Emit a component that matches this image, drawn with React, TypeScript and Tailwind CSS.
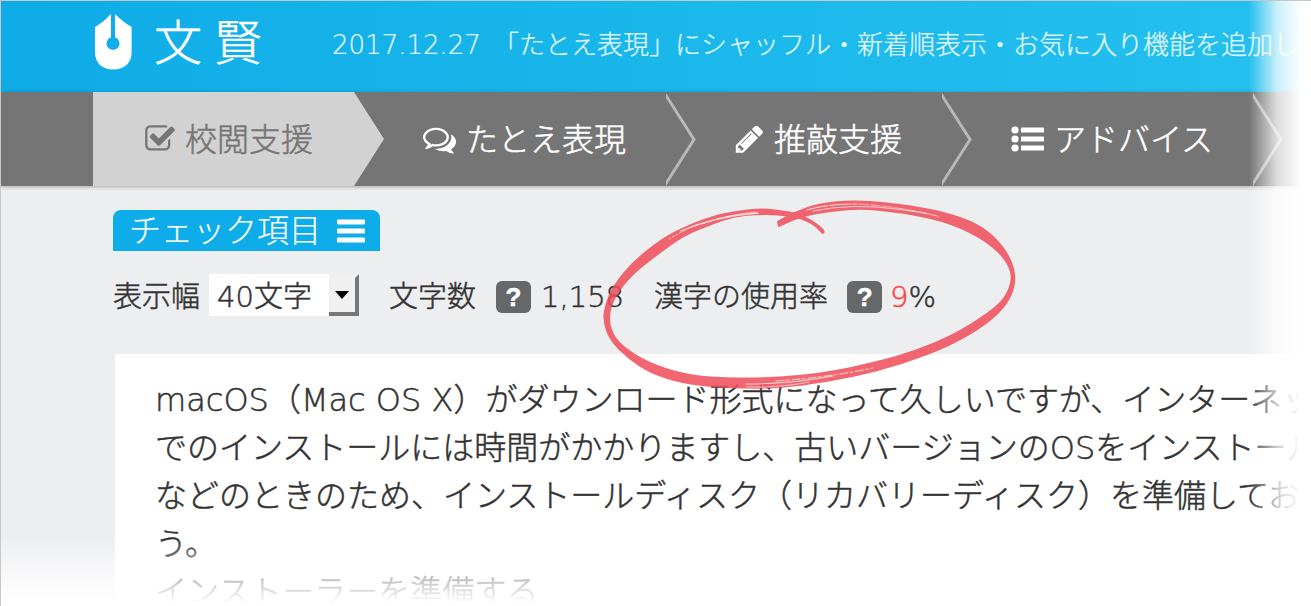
import React from 'react';

interface IconProps {
  className?: string;
}

const CheckIcon: React.FC<IconProps> = ({ className }) => (
  <svg viewBox="64 0 1664 1792" className={className} fill="currentColor" aria-hidden="true">
    <path d="M1472 930v318q0 119-84.5 203.5t-203.5 84.5h-832q-119 0-203.5-84.5t-84.5-203.5v-832q0-119 84.5-203.5t203.5-84.5h832q63 0 117 25 15 7 18 23 3 17-9 29l-49 49q-10 10-23 10-3 0-9-2-23-6-45-6h-832q-66 0-113 47t-47 113v832q0 66 47 113t113 47h832q66 0 113-47t47-113v-254q0-13 9-22l64-64q10-10 23-10 6 0 12 3 20 8 20 29zm231-489l-814 814q-24 24-57 24t-57-24l-430-430q-24-24-24-57t24-57l110-110q24-24 57-24t57 24l263 263 647-647q24-24 57-24t57 24l110 110q24 24 24 57t-24 57z" />
  </svg>
);

const CommentsIcon: React.FC<IconProps> = ({ className }) => (
  <svg viewBox="0 0 1792 1792" className={className} fill="currentColor" aria-hidden="true">
    <path d="M704 384q-153 0-286 52t-211.5 141-78.5 191q0 82 53 158t149 132l97 56-35 84q34-20 62-39l44-31 53 10q78 14 153 14 153 0 286-52t211.5-141 78.5-191-78.5-191-211.5-141-286-52zm0-128q191 0 353.5 68.5t256.5 186.5 94 257-94 257-256.5 186.5-353.5 68.5q-86 0-176-16-124 88-278 128-36 9-86 16h-3q-11 0-20.5-8t-11.5-21q-1-3-1-6.5t.5-6.5 2-6l2.5-5 3.5-5.5 4-5 4.5-5 4-4.5q5-6 23-25t26-29.5 22.5-29 25-38.5 20.5-44q-124-72-195-177t-71-224q0-139 94-257t256.5-186.5 353.5-68.5zm822 1169q10 24 20.5 44t25 38.5 22.5 29 26 29.5 23 25q1 1 4 4.5t4.5 5 4 5 3.5 5.500l2.5 5 2 6 .5 6.5-1 6.5q-3 14-13 22t-22 7q-50-7-86-16-154-40-278-128-90 16-176 16-271 0-472-132 58 4 88 4 161 0 309-45t264-129q125-92 192-212t67-254q0-77-23-152 129 71 204 178t75 230q0 120-71 224.5t-195 176.5z" />
  </svg>
);

const PencilIcon: React.FC<IconProps> = ({ className }) => (
  <svg viewBox="128 0 1536 1792" className={className} fill="currentColor" aria-hidden="true">
    <path d="M491 1536l91-91-235-235-91 91v107h128v128h107zm523-928q0-22-22-22-10 0-17 7l-542 542q-7 7-7 17 0 22 22 22 10 0 17-7l542-542q7-7 7-17zm-54-192l416 416-832 832h-416v-416zm683 96q0 53-37 90l-166 166-416-416 166-165q36-38 90-38 53 0 91 38l235 234q37 39 37 91z" />
  </svg>
);

const ListIcon: React.FC<IconProps> = ({ className }) => (
  <svg viewBox="0 0 33 34" className={className} fill="currentColor" aria-hidden="true">
    <circle cx="4" cy="8" r="3.6" />
    <circle cx="4" cy="17" r="3.6" />
    <circle cx="4" cy="26" r="3.6" />
    <rect x="10" y="5.5" width="23" height="5" rx="0.6" />
    <rect x="10" y="14.5" width="23" height="5" rx="0.6" />
    <rect x="10" y="23.5" width="23" height="5" rx="0.6" />
  </svg>
);

interface NavItem {
  id: string;
  label: string;
  icon: React.ReactNode;
  active?: boolean;
}

const navItems: NavItem[] = [
  { id: 'proofread', label: '校閲支援', icon: <CheckIcon className="h-8 w-[30px]" />, active: true },
  { id: 'metaphor', label: 'たとえ表現', icon: <CommentsIcon className="h-[33px] w-[33px]" /> },
  { id: 'refine', label: '推敲支援', icon: <PencilIcon className="h-8 w-[29px]" /> },
  { id: 'advice', label: 'アドバイス', icon: <ListIcon className="h-[34px] w-[33px]" /> },
];

const lines = [
  'macOS（Mac OS X）がダウンロード形式になって久しいですが、インターネッ',
  'でのインストールには時間がかかりますし、古いバージョンのOSをインストール',
  'などのときのため、インストールディスク（リカバリーディスク）を準備しておき',
  'う。',
  'インストーラーを準備する',
];

// Outline of the brush circle, outer edge first and then back along the inner edge
const circlePoints: [number, number][] = [
  [823, 234], [824, 230], [813, 221], [797, 213], [780, 210], [760, 208], [733, 211], [710, 216],
  [680, 228], [660, 239], [633, 260], [612, 285], [603, 307], [602, 323], [609, 341], [627, 359],
  [650, 374], [682, 384], [720, 388], [767, 389], [800, 386], [850, 378], [900, 365], [950, 346],
  [987, 324], [1008, 303], [1016, 280], [1010, 257], [993, 235], [970, 220], [933, 209], [887, 202],
  [850, 200], [817, 203], [793, 212], [776, 221], [776, 222], [777, 227], [778, 227], [800, 217],
  [827, 212], [860, 209], [900, 213], [940, 221], [970, 233], [993, 248], [1007, 264], [1011, 280],
  [1003, 299], [985, 314], [953, 334], [913, 351], [873, 362], [827, 372], [767, 378], [710, 377],
  [680, 373], [647, 362], [623, 347], [611, 333], [608, 315], [614, 297], [631, 275], [658, 254],
  [683, 236], [710, 225], [733, 217], [755, 215], [777, 215], [797, 218], [813, 225], [821, 234],
];

const smoothPath = (points: [number, number][]) => {
  const mid = (a: [number, number], b: [number, number]) => `${(a[0] + b[0]) / 2} ${(a[1] + b[1]) / 2}`;
  const n = points.length;
  const parts = points.map((p, i) => `Q${p[0]} ${p[1]} ${mid(p, points[(i + 1) % n])}`);
  return `M${mid(points[n - 1], points[0])}${parts.join('')}Z`;
};

const BrushCircle: React.FC<IconProps> = ({ className }) => (
  <svg viewBox="598 196 422 196" className={className} fill="none" aria-hidden="true">
    <path d={smoothPath(circlePoints)} fill="#f04d5a" fillOpacity="0.86" />
    <g stroke="#f3eef0" strokeLinecap="round" strokeOpacity="0.85">
      <path d="M680 231Q715 216 757 213" strokeWidth="1.3" />
      <path d="M668 239L684 230" strokeWidth="0.8" strokeDasharray="2 2" />
      <path d="M700 224Q730 214 755 212" strokeWidth="0.7" />
      <path d="M806 210Q825 204 856 204" strokeWidth="1.1" strokeDasharray="14 1 6 2" />
      <path d="M812 211Q850 203 895 209T938 217" strokeWidth="0.9" />
      <path d="M858 204Q890 206 925 213" strokeWidth="0.7" strokeDasharray="10 2" />
      <path d="M745 384Q790 384 832 376" strokeWidth="1.1" />
      <path d="M775 381Q830 377 872 368" strokeWidth="1" strokeDasharray="8 2 3 3" />
      <path d="M746 387Q780 388 808 382" strokeWidth="0.8" />
    </g>
  </svg>
);

const HelpButton: React.FC<{ label: string }> = ({ label }) => (
  <button
    type="button"
    aria-label={label}
    className="flex h-8 w-[35px] items-center justify-center rounded-md bg-[#666768] font-['Liberation_Sans',sans-serif] text-[26px] leading-8 font-bold text-white"
  >
    ?
  </button>
);

const App: React.FC = () => {
  return (
    <div className="relative flex h-screen flex-col overflow-hidden border-t border-l border-[#c8c8c8] bg-[#edeef0] font-['DejaVu_Sans_Light','DejaVu_Sans','Noto_Sans_CJK_JP',sans-serif] font-light text-[#333] [-webkit-text-stroke:0.5px_currentColor]">
      <header className="flex h-[91px] shrink-0 items-center overflow-hidden bg-linear-to-r from-[#0eabe7] via-[#1ab7eb] to-[#24c0ef] pb-2 pl-[93px] whitespace-nowrap text-white">
        <a href="#" className="flex shrink-0 items-center">
          <svg viewBox="0 0 38 58" className="h-[58px] w-[38px]" aria-hidden="true">
            <path
              fill="#fff"
              d="M17 0C12 5.500 7 9.500 1 13V38C1 49 8 55.500 19.300 55.500S37.600 49 37.600 38V13C31.500 9.500 26.500 5.500 21 0V23.300A6.500 6.500 0 1 1 17 23.300Z"
            />
          </svg>
          <span className="ml-[22px] flex gap-3 text-[48px] leading-[80px]">
            <span>文</span>
            <span>賢</span>
          </span>
        </a>
        <p className="ml-[70px] flex gap-3 pt-1 text-[26px] leading-10 text-white/85 [-webkit-text-stroke:0.2px_currentColor]">
          <time dateTime="2017-12-27">2017.12.27</time>
          <span>「たとえ表現」にシャッフル・新着順表示・お気に入り機能を追加しま</span>
        </p>
      </header>

      <nav className="z-10 flex h-[94px] shrink-0 bg-[#757575] pl-[92px] whitespace-nowrap shadow-[0_1px_4px_rgba(0,0,0,0.3)]">
        {navItems.map((item) => (
          <a
            key={item.id}
            href={`#${item.id}`}
            className={
              item.active
                ? 'relative flex shrink-0 items-center gap-[10px] bg-[#d2d2d2] pr-[41px] pl-[52px] text-[32px] leading-[48px] text-[#757575]'
                : 'relative flex shrink-0 items-center gap-[10px] pr-10 pl-[69px] text-[32px] leading-[48px] text-white'
            }
          >
            {item.icon}
            <span className="pt-0.5">{item.label}</span>
            <svg viewBox="0 0 30 94" className="absolute top-0 left-full h-[94px] w-[30px]" aria-hidden="true">
              {item.active ? (
                <path d="M0 0L30 47L0 94Z" fill="#d2d2d2" />
              ) : (
                <path d="M-1 2L28 47.500L-1 93" fill="none" stroke="#b8b8b8" strokeWidth="3" />
              )}
            </svg>
          </a>
        ))}
      </nav>

      <main className="pt-6 pl-28">
        <button
          type="button"
          className="flex h-[41px] items-center gap-4 rounded-t-lg bg-[#0eace8] pr-[15px] pl-4 text-[32px] leading-[41px] text-white [-webkit-text-stroke:0.2px_currentColor]"
        >
          <span className="pt-0.5">チェック項目</span>
          <svg viewBox="0 0 28 24" className="h-6 w-7" fill="currentColor" aria-hidden="true">
            <rect y="0.500" width="28" height="5" rx="1" />
            <rect y="9.500" width="28" height="5" rx="1" />
            <rect y="18.500" width="28" height="5" rx="1" />
          </svg>
        </button>

        <div className="mt-[23px] flex h-[42px] items-center text-[29px] leading-[42px] whitespace-nowrap">
          <label htmlFor="width" className="pt-1">
            表示幅
          </label>
          <div className="relative ml-[9px]">
            <select
              id="width"
              className="block h-[42px] w-[150px] appearance-none rounded-none bg-white pt-1 pl-2 text-[29px] leading-[38px]"
            >
              <option>40文字</option>
            </select>
            <span className="pointer-events-none absolute top-0 right-0 flex h-[42px] w-[30px] items-center justify-center border-t-4 border-r-4 border-b-4 border-t-[#f0f0f0] border-r-[#777] border-b-[#777] bg-[#f0f0f0]">
              <svg viewBox="0 0 14 8" className="h-2 w-3.5" aria-hidden="true">
                <path d="M0 0H14L7 8Z" fill="#000" />
              </svg>
            </span>
          </div>
          <span className="ml-[30px] pt-1">文字数</span>
          <div className="mt-1 mr-[10px] ml-5">
            <HelpButton label="文字数" />
          </div>
          <span className="pt-1">1,158</span>
          <div className="relative ml-[30px] flex items-center">
            <span className="pt-1">漢字の使用率</span>
            <div className="mt-1 mr-2 ml-[19px]">
              <HelpButton label="漢字の使用率" />
            </div>
            <span className="pt-1">
              <span className="text-[#ff4046]">9</span>%
            </span>
            <BrushCircle className="pointer-events-none absolute -top-[76px] -left-[55px] z-20 h-[196px] w-[422px] max-w-none" />
          </div>
        </div>

        <article className="mt-[38px] ml-0.5 bg-white px-10 pt-[22px] pb-10 text-[32px] leading-[48px] whitespace-nowrap">
          {lines.map((line) => (
            <p key={line}>{line}</p>
          ))}
        </article>
      </main>

      {/* Edge fades */}
      <div className="pointer-events-none absolute inset-y-0 right-0 z-30 w-[62px] bg-linear-to-r from-white/0 via-white/75 via-45% to-white to-85%" />
      <div className="pointer-events-none absolute inset-x-0 -left-px bottom-0 z-30 h-[68px] bg-linear-to-b from-white/0 via-white/60 to-white to-95%" />
    </div>
  );
};

export default App;
